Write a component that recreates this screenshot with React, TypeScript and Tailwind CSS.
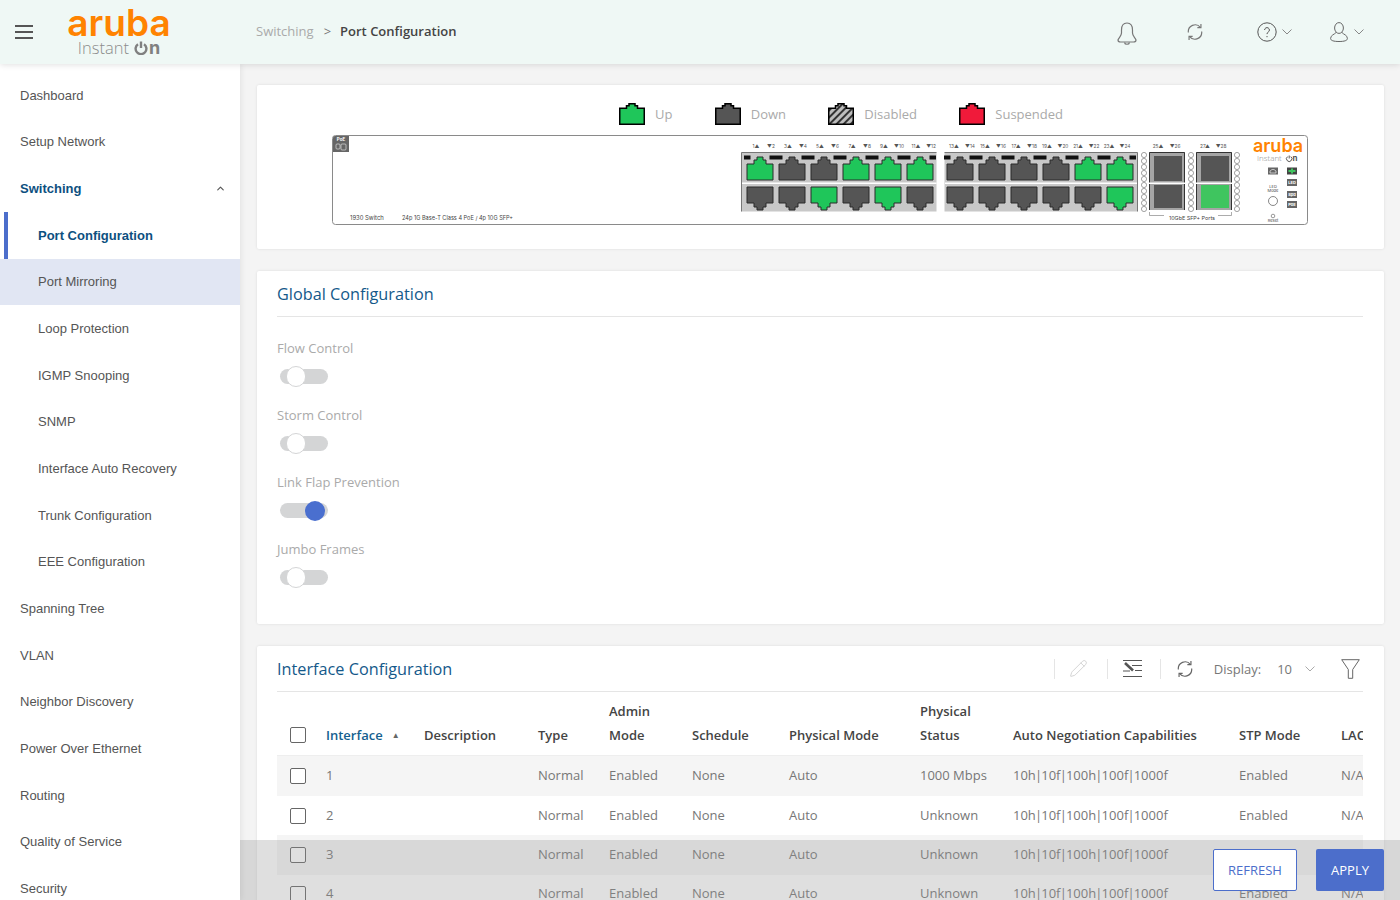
import { ChevronUp, Pencil } from "lucide-react";

const menu = [
  { label: "Dashboard" },
  { label: "Setup Network" },
  { label: "Switching", open: true },
  { label: "Port Configuration", sub: true, active: true },
  { label: "Port Mirroring", sub: true, hover: true },
  { label: "Loop Protection", sub: true },
  { label: "IGMP Snooping", sub: true },
  { label: "SNMP", sub: true },
  { label: "Interface Auto Recovery", sub: true },
  { label: "Trunk Configuration", sub: true },
  { label: "EEE Configuration", sub: true },
  { label: "Spanning Tree" },
  { label: "VLAN" },
  { label: "Neighbor Discovery" },
  { label: "Power Over Ethernet" },
  { label: "Routing" },
  { label: "Quality of Service" },
  { label: "Security" },
];

const toggles = [
  { label: "Flow Control", on: false },
  { label: "Storm Control", on: false },
  { label: "Link Flap Prevention", on: true },
  { label: "Jumbo Frames", on: false },
];

const rows = [
  { id: "1", status: "1000 Mbps" },
  { id: "2", status: "Unknown" },
  { id: "3", status: "Unknown" },
  { id: "4", status: "Unknown" },
];

const speeds = ["10h", "10f", "100h", "100f", "1000f"];

const gridCols = "grid grid-cols-[49px_98px_114px_71px_83px_97px_131px_93px_226px_102px_100px]";

const topPorts = [1, 0, 0, 1, 1, 1, 0, 0, 0, 0, 1, 1];
const bottomPorts = [0, 0, 1, 0, 1, 0, 0, 0, 0, 0, 0, 1];
const portX = [747, 779, 811, 843, 875, 907, 947, 979, 1011, 1043, 1075, 1107];
const ledY = [155, 161, 167, 173, 179, 185, 191, 197, 203, 209];

const PORT_GREEN = "#1fc65a";
const PORT_DARK = "#555555";

function LegendPort({ fill }: { fill: string }) {
  return (
    <svg width="26" height="22" viewBox="0 0 26 22">
      <defs>
        <pattern id="stripes" width="5" height="5" patternUnits="userSpaceOnUse" patternTransform="rotate(45)">
          <rect width="5" height="5" fill="#bdbdbd" />
          <rect width="2" height="5" fill="#333333" />
        </pattern>
      </defs>
      <path
        d="M.75 21.25V5.25H7.5V2.75H10V.75H16V2.75H18.5V5.25H25.25V21.25Z"
        fill={fill}
        stroke="#000"
        strokeWidth="1.5"
      />
    </svg>
  );
}

function PanelPort({ x, y, on, flip }: { x: number; y: number; on: number; flip?: boolean }) {
  const d = flip
    ? `M${x} ${y}H${x + 26}V${y + 16}H${x + 19}V${y + 20}H${x + 16}V${y + 23}H${x + 10}V${y + 20}H${x + 7}V${y + 16}H${x}Z`
    : `M${x} ${y + 23}H${x + 26}V${y + 7}H${x + 19}V${y + 3}H${x + 16}V${y}H${x + 10}V${y + 3}H${x + 7}V${y + 7}H${x}Z`;
  return (
    <path d={d} fill={on ? PORT_GREEN : PORT_DARK} stroke="#2b2b2b" strokeWidth="1" strokeLinejoin="round" />
  );
}

function SwitchPanel() {
  const small = { fontFamily: "Inter, sans-serif" };
  return (
    <svg width="976" height="90" viewBox="332 135 976 90" className="ml-[75px] mt-[10px] block">
      <rect x="332.5" y="135.5" width="975" height="89" rx="3" fill="#fff" stroke="#8a8a8a" />
      <path d="M333 152V138a2 2 0 0 1 2-2H349V152Z" fill="#666" />
      <text x="341" y="141" fontSize="4.5" fill="#fff" textAnchor="middle" fontWeight="700" style={small}>PoE</text>
      <rect x="336" y="144" width="4" height="5" rx="1" fill="none" stroke="#ddd" strokeWidth=".7" />
      <rect x="341" y="144" width="5" height="6" rx="1" fill="none" stroke="#ddd" strokeWidth=".7" />
      <text x="350" y="219.5" fontSize="5.9" fill="#444" style={small}>1930 Switch</text>
      <text x="402" y="219.5" fontSize="5.6" fill="#444" style={small}>24p 1G Base-T Class 4 PoE / 4p 10G SFP+</text>

      {Array.from({ length: 6 }).map((_, i) => (
        <g key={i} fontSize="4.8" fill="#555" textAnchor="middle" style={small}>
          <text x={756 + 32 * i} y="148">{`${2 * i + 1}▲`}</text>
          <text x={771 + 32 * i} y="148">{`▼${2 * i + 2}`}</text>
          <text x={954 + 31 * i} y="148">{`${2 * i + 13}▲`}</text>
          <text x={970 + 31 * i} y="148">{`▼${2 * i + 14}`}</text>
        </g>
      ))}

      <rect x="741.5" y="152.5" width="195" height="59" fill="#c8c8c8" />
      <path d="M741.5 211.5V152.5H936.5" fill="none" stroke="#777" />
      <rect x="944.5" y="152.5" width="193" height="59" fill="#c8c8c8" />
      <path d="M944.5 152.5H1137.5V211.5" fill="none" stroke="#777" />
      <rect x="742" y="182.5" width="194.5" height="1.5" fill="#fff" />
      <rect x="945" y="182.5" width="192" height="1.5" fill="#fff" />

      {portX.map((x, i) => (
        <g key={x}>
          <rect x={x - 3} y="155.5" width="6.5" height="4" fill="#111" />
          <rect x={x + 22.5} y="155.5" width="6.5" height="4" fill="#111" />
          <PanelPort x={x} y={157} on={topPorts[i]} />
          <PanelPort x={x} y={187} on={bottomPorts[i]} flip />
        </g>
      ))}

      {[1144, 1191, 1237].map((x) =>
        ledY.map((y) => <circle key={`${x}-${y}`} cx={x} cy={y} r="2.6" fill="#fff" stroke="#666" strokeWidth=".6" />),
      )}

      <g fontSize="4.8" fill="#555" textAnchor="middle" style={small}>
        <text x="1158" y="148">25▲</text>
        <text x="1175" y="148">▼26</text>
        <text x="1205" y="148">27▲</text>
        <text x="1221" y="148">▼28</text>
      </g>
      {[1149, 1196].map((x) => (
        <g key={x}>
          <rect x={x} y="152" width="36" height="58" fill="#a5a5a5" />
          <path d={`M${x + .5} 210V152.5H${x + 35.5}V210`} fill="none" stroke="#333" />
          <rect x={x} y="182.5" width="36" height="1.5" fill="#fff" />
        </g>
      ))}
      <rect x="1154" y="156" width="28" height="25" fill={PORT_DARK} />
      <rect x="1154" y="185" width="28" height="23" fill={PORT_DARK} />
      <rect x="1201" y="156" width="28" height="25" fill={PORT_DARK} />
      <rect x="1201" y="185" width="28" height="23" fill="#3fc55f" />

      <path d="M1149.5 212V215.5H1164M1218 215.5H1231.5V212" fill="none" stroke="#888" strokeWidth=".7" />
      <text x="1192" y="219.5" fontSize="5.4" fill="#444" textAnchor="middle" style={small}>10GbE SFP+ Ports</text>

      <text x="1278" y="152" fontSize="18" fontWeight="600" fill="#ff8300" textAnchor="middle" style={small}>aruba</text>
      <text x="1257" y="161" fontSize="8" fontWeight="300" fill="#888" style={{ fontFamily: "'Open Sans', sans-serif" }}>Instant</text>
      <path d="M1287.6 156.6a2.7 2.7 0 1 0 3.2 0M1289.2 155.5v3" fill="none" stroke="#555" strokeWidth="1" />
      <text x="1292.5" y="161" fontSize="8" fontWeight="700" fill="#555" style={small}>n</text>

      <rect x="1268" y="167.5" width="10" height="7" fill="#666" />
      <path d="M1270 173V171L1272 169.5H1274L1276 171V173Z" fill="none" stroke="#fff" strokeWidth=".6" />
      <rect x="1287" y="167.5" width="10" height="7" fill="#444" />
      <path d="M1292 168.5V173.5M1288.5 171H1295.5" stroke="#3fc55f" strokeWidth="2" />

      {[179, 191, 201].map((y, i) => (
        <g key={y}>
          <rect x="1287" y={y} width="10" height="7" fill="#666" />
          <text x="1292" y={y + 5} fontSize="4" fill="#fff" fontWeight="700" textAnchor="middle" style={small}>
            {["LED", "Spd", "PoE"][i]}
          </text>
        </g>
      ))}
      <text x="1273" y="188" fontSize="4" fill="#444" textAnchor="middle" style={small}>LED</text>
      <text x="1273" y="192" fontSize="4" fill="#444" textAnchor="middle" style={small}>Mode</text>
      <circle cx="1273" cy="201" r="4.5" fill="#fff" stroke="#555" strokeWidth=".7" />
      <circle cx="1273" cy="216" r="1.8" fill="#fff" stroke="#555" strokeWidth=".6" />
      <text x="1273" y="222" fontSize="4" fill="#444" textAnchor="middle" style={small}>Reset</text>
    </svg>
  );
}

function RefreshIcon({ size = 18, color = "#777" }: { size?: number; color?: string }) {
  return (
    <svg width={size} height={size} viewBox="0 0 20 20" fill="none" stroke={color} strokeWidth="1.3">
      <path d="M16 4.8A7.6 7.6 0 0 0 2.6 10.5" />
      <path d="M16.6 1.2V5.2H12.6" />
      <path d="M4 15.2A7.6 7.6 0 0 0 17.4 9.5" />
      <path d="M3.4 18.8V14.8H7.4" />
    </svg>
  );
}

function Caret({ className, color = "#888" }: { className?: string; color?: string }) {
  return (
    <svg width="10" height="6" viewBox="0 0 10 6" fill="none" stroke={color} strokeWidth="1" className={className}>
      <path d="M.5.5L5 5 9.5.5" />
    </svg>
  );
}

function Header() {
  return (
    <header className="relative z-10 flex h-[64px] shrink-0 items-center bg-[#eff8f5] shadow-[0_1px_6px_rgba(0,0,0,0.12)]">
      <div className="ml-[15px] flex w-[18px] flex-col gap-[4px]">
        <span className="h-[2px] bg-[#555]" />
        <span className="h-[2px] bg-[#555]" />
        <span className="h-[2px] bg-[#555]" />
      </div>
      <div className="ml-[35px] flex w-[102px] flex-col items-center">
        <span className="font-['Inter',sans-serif] text-[37px] font-semibold leading-[34px] text-[#ff8300]">
          aruba
        </span>
        <span className="mt-[-2px] flex items-center font-['Open_Sans',sans-serif] text-[16.5px] font-light leading-[20px] text-[#8c8c8c]">
          Instant
          <svg width="14" height="14" viewBox="0 0 14 14" fill="none" stroke="#808080" strokeWidth="2.4" className="ml-[5px]">
            <path d="M4 3.2a5.4 5.4 0 1 0 6 0M7 .6V7" />
          </svg>
          <span className="ml-[1px] font-['Inter',sans-serif] text-[18px] font-bold leading-[18px] text-[#808080]">n</span>
        </span>
      </div>
      <div className="ml-[86px] flex items-center font-['Open_Sans',sans-serif] text-[13px]">
        <span className="text-[#aaaaaa]">Switching</span>
        <span className="ml-[10px] text-[#777]">&gt;</span>
        <span className="ml-[9px] font-semibold text-[#444]">Port Configuration</span>
      </div>
      <div className="ml-auto mr-[36px] flex items-center">
        <svg width="20" height="24" viewBox="0 0 20 24" fill="none" stroke="#777" strokeWidth="1.2" className="mt-[3px]">
          <path d="M10 1C6 1 4.5 4 4.5 8V11C4.5 14 1.5 16 1 18 1 19.5 2 20 3.5 20H16.5C18 20 19 19.5 19 18 18.5 16 15.5 14 15.5 11V8C15.5 4 14 1 10 1Z" />
          <path d="M7.5 20.5C8 22.8 12 22.8 12.5 20.5" />
        </svg>
        <span className="ml-[49px]">
          <RefreshIcon />
        </span>
        <svg width="20" height="20" viewBox="0 0 20 20" fill="none" stroke="#555" strokeWidth="1" className="ml-[53px]">
          <circle cx="10" cy="10" r="9.2" />
          <path d="M7.6 8a2.4 2.4 0 1 1 3.6 2.1c-.8.5-1.2 1-1.2 2M10 14v1.2" />
        </svg>
        <Caret className="ml-[5px]" />
        <svg width="18" height="20" viewBox="0 0 18 20" fill="none" stroke="#666" strokeWidth="1" className="ml-[38px]">
          <ellipse cx="9" cy="6" rx="4.4" ry="5.4" />
          <path d="M6 10.5C4.5 12.5 .6 13 .6 16.5 .6 18.5 3.5 19.5 9 19.5S17.4 18.5 17.4 16.5C17.4 13 13.5 12.5 12 10.5" />
        </svg>
        <Caret className="ml-[6px]" />
      </div>
    </header>
  );
}

function Sidebar() {
  return (
    <aside className="relative z-[5] h-full w-[240px] shrink-0 overflow-hidden bg-white pt-[8.1px] font-['Liberation_Sans',sans-serif] text-[13px] text-[#555] shadow-[1px_0_6px_rgba(0,0,0,0.08)]">
      {menu.map((m) => (
        <div
          key={m.label}
          className={`flex h-[46.67px] items-center ${m.sub ? "pl-[38px]" : "pl-[20px]"} ${
            m.hover ? "bg-[#e1e6f3]" : ""
          } ${m.active ? "ml-[4px] border-l-4 border-[#4c6ecb] !pl-[30px]" : ""} ${
            m.active || m.open ? "font-bold text-[#0d5080]" : ""
          }`}
        >
          {m.label}
          {m.open && <ChevronUp size={11} strokeWidth={2.5} className="ml-auto mr-[14px] text-[#555]" />}
        </div>
      ))}
    </aside>
  );
}

function Toggle({ on }: { on: boolean }) {
  return (
    <div className={`ml-[3px] mt-[11px] flex h-[15px] w-[48px] items-center rounded-full bg-[#d4d5d6] ${on ? "justify-end pr-[3px]" : "pl-[6px]"}`}>
      {on ? (
        <span className="h-[20px] w-[20px] rounded-full bg-[#4a6fcf]" />
      ) : (
        <span className="h-[21px] w-[20px] rounded-full border border-[#d4d5d6] bg-white" />
      )}
    </div>
  );
}

function Check() {
  return <span className="ml-[13px] block h-[16px] w-[16px] rounded-[2px] border border-[#666] bg-white" />;
}

function InterfaceTable() {
  return (
    <div className="w-[1086px] overflow-hidden text-[13px]">
      <div className={`${gridCols} h-[64px] w-[1164px] items-end border-b border-[#eeeeee] pb-[8px] font-semibold leading-[24px] text-[#444]`}>
        <span className="mb-[4px]">
          <Check />
        </span>
        <span className="flex items-center text-[#14608f]">
          Interface
          <span className="ml-[9px] text-[8px] text-[#666]">▲</span>
        </span>
        <span>Description</span>
        <span>Type</span>
        <span>
          Admin
          <br />
          Mode
        </span>
        <span>Schedule</span>
        <span>Physical Mode</span>
        <span>
          Physical
          <br />
          Status
        </span>
        <span>Auto Negotiation Capabilities</span>
        <span>STP Mode</span>
        <span>LACP</span>
      </div>
      {rows.map((r, i) => (
        <div
          key={r.id}
          className={`${gridCols} ${i === 0 ? "h-[40px]" : "h-[39.3px]"} w-[1164px] items-center text-[#777] ${i % 2 === 0 ? "bg-[#f5f5f5]" : "bg-white"}`}
        >
          <Check />
          <span>{r.id}</span>
          <span />
          <span>Normal</span>
          <span>Enabled</span>
          <span>None</span>
          <span>Auto</span>
          <span>{r.status}</span>
          <span>
            {speeds.map((s, j) => (
              <span key={s}>
                {j > 0 && <span className="mx-[-0.875px]">|</span>}
                {s}
              </span>
            ))}
          </span>
          <span>Enabled</span>
          <span>N/A</span>
        </div>
      ))}
    </div>
  );
}

function Toolbar() {
  return (
    <div className="ml-auto mr-[3px] flex items-center text-[13px] text-[#777]">
      <span className="h-[20px] w-px bg-[#e5e5e5]" />
      <Pencil size={19} strokeWidth={1} className="ml-[14px] text-[#c8c8c8]" />
      <span className="ml-[19px] h-[20px] w-px bg-[#e5e5e5]" />
      <svg width="19" height="19" viewBox="0 0 19 19" fill="none" stroke="#555" className="ml-[15px]">
        <path d="M0 1.5H19M9 6.5H19M12 11.5H19M0 17.5H19" strokeWidth="1" />
        <path d="M2 4L10 11.5" strokeWidth="2.6" />
        <path d="M0 12H7" strokeWidth="1" />
      </svg>
      <span className="ml-[18px] h-[20px] w-px bg-[#e5e5e5]" />
      <span className="ml-[15px]">
        <RefreshIcon size={18} color="#666" />
      </span>
      <span className="ml-[20px] mt-[2px]">Display:</span>
      <span className="ml-[16px] mt-[2px]">10</span>
      <Caret className="ml-[13px]" color="#aaa" />
      <svg width="19" height="20" viewBox="0 0 19 20" fill="none" stroke="#666" strokeWidth="1" className="ml-[26px]">
        <path d="M.7.7H18.3L11.7 10.5V19.3H7.3V10.5Z" />
      </svg>
    </div>
  );
}

export default function App() {
  return (
    <div className="relative flex h-[900px] w-[1400px] flex-col overflow-hidden bg-[#f4f4f4] font-['Open_Sans',sans-serif]">
      <Header />
      <div className="flex min-h-0 flex-1">
        <Sidebar />
        <main className="min-w-0 flex-1 overflow-hidden pl-[17px] pr-[16px] pt-[21px]">
          <section className="h-[164px] rounded-[2px] bg-white pt-[18px] shadow-[0_0_3px_rgba(0,0,0,0.1)]">
            <div className="flex items-center justify-center gap-[42.33px] pl-[41px] text-[13px] text-[#aaaaaa]">
              <span className="flex items-center gap-[10px]"><LegendPort fill="#1fc65a" /><span className="pt-[1px]">Up</span></span>
              <span className="flex items-center gap-[10px]"><LegendPort fill="#555555" /><span className="pt-[1px]">Down</span></span>
              <span className="flex items-center gap-[10px]"><LegendPort fill="url(#stripes)" /><span className="pt-[1px]">Disabled</span></span>
              <span className="flex items-center gap-[10px]"><LegendPort fill="#f01a3a" /><span className="pt-[1px]">Suspended</span></span>
            </div>
            <SwitchPanel />
          </section>

          <section className="mt-[22px] h-[353px] rounded-[2px] bg-white pl-[20px] pr-[21px] shadow-[0_0_3px_rgba(0,0,0,0.1)]">
            <h2 className="flex h-[46px] items-center border-b border-[#e5e5e5] pt-[2px] text-[16.25px] text-[#14598a]">Global Configuration</h2>
            <div className="pt-[21px]">
              {toggles.map((t) => (
                <div key={t.label} className="h-[67px] text-[13px] leading-[20px] text-[#aaaaaa]">
                  {t.label}
                  <Toggle on={t.on} />
                </div>
              ))}
            </div>
          </section>

          <section className="mt-[22px] h-[300px] rounded-[2px] bg-white pl-[20px] pr-[21px] shadow-[0_0_3px_rgba(0,0,0,0.1)]">
            <div className="flex h-[46px] items-center border-b border-[#e5e5e5]">
              <h2 className="pt-[2px] text-[16.25px] text-[#14598a]">Interface Configuration</h2>
              <Toolbar />
            </div>
            <InterfaceTable />
          </section>
        </main>
      </div>

      <div className="absolute bottom-0 left-[240px] right-0 flex h-[60px] items-center justify-end gap-[19px] bg-[rgba(150,150,150,0.3)] pr-[16px] text-[13px]">
        <button className="h-[42px] w-[84px] rounded-[2px] border border-[#4c6ecb] bg-white pt-[1px] text-[#4c6ecb]">REFRESH</button>
        <button className="h-[42px] w-[68px] rounded-[2px] bg-[#4c6ecb] pt-[1px] text-white">APPLY</button>
      </div>
    </div>
  );
}
